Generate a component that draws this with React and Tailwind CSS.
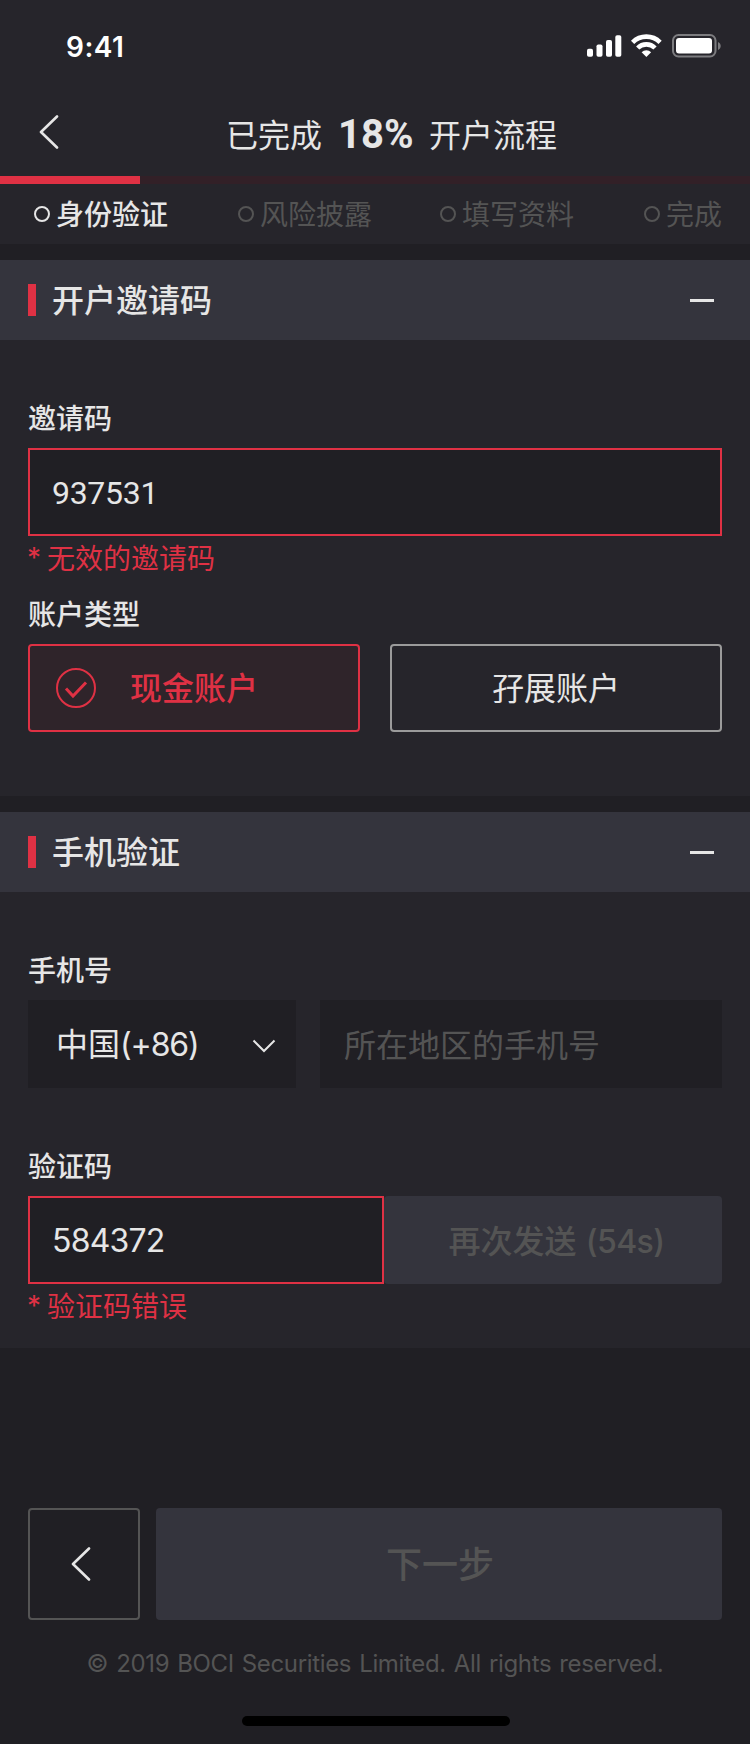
import React from "react";

const CJK = "font-['Noto_Sans_CJK_SC',sans-serif]";

function ChevronLeft() {
  return (
    <svg width="20" height="34" viewBox="0 0 20 34" fill="none" stroke="currentColor" strokeWidth="2.6" strokeLinecap="round" strokeLinejoin="round">
      <path d="M18 1.5 2 17l16 15.500" />
    </svg>
  );
}

function StatusBar() {
  return (
    <div className="flex h-[88px] items-start justify-between pl-[66px] pr-[29px] text-white">
      <span className="mt-[31px] font-['Inter',sans-serif] text-[28px] leading-[32px] font-semibold tracking-[0.5px]">9:41</span>
      <div className="mt-[34px] flex h-[24px]">
        <svg width="134" height="24" viewBox="0 0 134 24" fill="none">
          <rect x="0" y="14.700" width="6" height="8" rx="1.800" fill="#fff" />
          <rect x="9.500" y="10.500" width="6" height="12.200" rx="1.800" fill="#fff" />
          <rect x="19" y="6" width="6" height="16.700" rx="1.800" fill="#fff" />
          <rect x="28.300" y="1.300" width="6" height="21.400" rx="1.800" fill="#fff" />
          <g transform="translate(44 0)" stroke="#fff" strokeWidth="4.600">
            <path d="M1.600 8.300a19.600 19.600 0 0 1 27.500 0" />
            <path d="M6.700 14a12.200 12.200 0 0 1 17.300 0" />
            <path d="M15.350 23 10.600 18.300a6.800 6.800 0 0 1 9.500 0z" fill="#fff" stroke="none" />
          </g>
          <rect x="86" y="1" width="42.500" height="21.500" rx="5.500" stroke="#fff" strokeOpacity=".4" strokeWidth="2" />
          <rect x="89" y="4" width="36" height="15.500" rx="3" fill="#fff" />
          <path d="M131 8v8c1.600-.7 2.700-2.200 2.700-4s-1.100-3.300-2.700-4z" fill="#fff" fillOpacity=".4" />
        </svg>
      </div>
    </div>
  );
}

function Step({ label, active }) {
  return (
    <div className={active ? "flex items-center gap-[6px] text-[#e6e6e6]" : "flex items-center gap-[6px] text-[#545454]"}>
      <span className="size-4 rounded-full border-2 border-current" />
      <span className={active ? "-mt-[3px] text-[28px] leading-[40px] font-medium" : "-mt-[3px] text-[28px] leading-[40px] font-normal"}>{label}</span>
    </div>
  );
}

function SectionHeader({ title }) {
  return (
    <div className="flex h-20 items-center bg-[#34343d] pr-9 pl-7">
      <span className="h-8 w-2 bg-[#df3144]" />
      <h2 className="-mt-[4px] ml-4 flex-1 text-[32px] leading-[48px] font-medium">{title}</h2>
      <span className="h-[3px] w-6 bg-[#e6e6e6]" />
    </div>
  );
}

function Label({ children }) {
  return <div className="h-[60px] pt-[1px] text-[28px] leading-[57px] font-medium">{children}</div>;
}

function ErrorText({ children }) {
  return (
    <div className="flex h-12 text-[28px] leading-[43px] font-normal text-[#df3144]">
      <span className="-ml-[1px] w-[20px] pt-[1px] font-['Inter',sans-serif] text-[28px]">*</span>
      <span>{children}</span>
    </div>
  );
}

export default function App() {
  return (
    <div className={`${CJK} flex h-[1744px] w-[750px] flex-col overflow-hidden bg-[#201f24] text-[#e6e6e6]`}>
      <header className="h-[244px] bg-[#26252b]">
        <StatusBar />
        <div className="flex h-[88px] items-center pl-[39px]">
          <ChevronLeft />
          <div className="ml-[167px] flex items-center text-[32px] leading-[48px] font-normal">
            <span className="mt-[1px]">已完成</span>
            <span className="mt-[6px] ml-[16px] w-[76px] font-['Roboto',sans-serif] text-[40px] font-bold">18%</span>
            <span className="mt-[1px] ml-[15px]">开户流程</span>
          </div>
        </div>
        <div className="h-2 bg-[#322027]">
          <div className="h-full w-[140px] bg-[#df3144]" />
        </div>
        <div className="grid h-[60px] grid-cols-[204px_202px_204px_auto] items-center pl-[34px] whitespace-nowrap">
          <Step label="身份验证" active />
          <Step label="风险披露" />
          <Step label="填写资料" />
          <Step label="完成" />
        </div>
      </header>

      <section className="mt-4 h-[536px] bg-[#26252b]">
        <SectionHeader title="开户邀请码" />
        <div className="px-7 pt-12">
          <Label>邀请码</Label>
          <div className="flex h-[88px] items-center border-2 border-[#df3144] bg-[#201f24] px-[22px] pt-[2px] font-['Roboto',sans-serif] text-[32px] tracking-[-0.3px]">937531</div>
          <ErrorText>无效的邀请码</ErrorText>
          <Label>账户类型</Label>
          <div className="flex justify-between">
            <div className="flex h-[88px] w-[332px] items-center rounded border-2 border-[#df3144] bg-[#2f242a] pl-[26px] text-[#df3144]">
              <svg width="40" height="40" viewBox="0 0 40 40" fill="none" stroke="currentColor">
                <circle cx="20" cy="20" r="19" strokeWidth="2" />
                <path d="M10 20.500 17 28 30 14.500" strokeWidth="3" />
              </svg>
              <span className="-mt-[4px] ml-[34px] text-[32px] leading-[48px] font-medium">现金账户</span>
            </div>
            <div className="flex h-[88px] w-[332px] items-center justify-center rounded border-2 border-[#9b9b9b] pb-[4px] text-[32px] leading-[48px] font-normal">
              <span>孖展账户</span>
            </div>
          </div>
        </div>
      </section>

      <section className="mt-4 h-[536px] bg-[#26252b]">
        <SectionHeader title="手机验证" />
        <div className="px-7 pt-12">
          <Label>手机号</Label>
          <div className="flex gap-6">
            <div className="flex h-[88px] w-[268px] items-center justify-between bg-[#201f24] pr-5 pl-7 text-[32px] leading-[48px] font-normal">
              <span className="-mt-[1px]">中国<span className="font-['Inter',sans-serif] tracking-[-1.1px]">(+86)</span></span>
              <svg className="mt-[3px]" width="24" height="14" viewBox="0 0 24 14" fill="none" stroke="currentColor" strokeWidth="2">
                <path d="M1.500 1.500 12 12 22.500 1.500" />
              </svg>
            </div>
            <div className="flex h-[88px] flex-1 items-center bg-[#201f24] pb-[3px] pl-6 text-[32px] leading-[48px] font-normal text-[#545454]">
              <span>所在地区的手机号</span>
            </div>
          </div>
          <div className="mt-12">
            <Label>验证码</Label>
          </div>
          <div className="flex">
            <div className="flex h-[88px] w-[356px] items-center border-2 border-[#df3144] bg-[#201f24] px-[22px] pt-[2px] font-['Inter',sans-serif] text-[32px] font-normal tracking-[-0.8px]">584372</div>
            <div className="flex h-[88px] flex-1 items-center justify-center rounded bg-[#34343d] pl-[7px] text-[32px] leading-[48px] font-medium text-[#545454]">
              <span>再次发送 <span className="ml-[2px] font-['Inter',sans-serif] tracking-[-0.6px]">(54s)</span></span>
            </div>
          </div>
          <ErrorText>验证码错误</ErrorText>
        </div>
      </section>

      <div className="mt-[160px] flex gap-4 px-7">
        <div className="flex size-28 items-center justify-center rounded border-2 border-[#545454] pr-[6px]">
          <ChevronLeft />
        </div>
        <div className="flex h-28 flex-1 items-center justify-center rounded bg-[#34343d] pb-[5px] pl-[2px] text-[36px] leading-[52px] font-medium text-[#545454]">
          <span>下一步</span>
        </div>
      </div>
      <footer className="mt-[28px] text-center font-['Inter',sans-serif] text-[24px] leading-[32px] font-normal tracking-[-0.35px] [word-spacing:1.6px] whitespace-nowrap text-[#545454]">
        © 2019 BOCI Securities Limited. All rights reserved.
      </footer>
      <div className="mt-[36px] ml-[242px] h-[10px] w-[268px] rounded-full bg-black" />
    </div>
  );
}
